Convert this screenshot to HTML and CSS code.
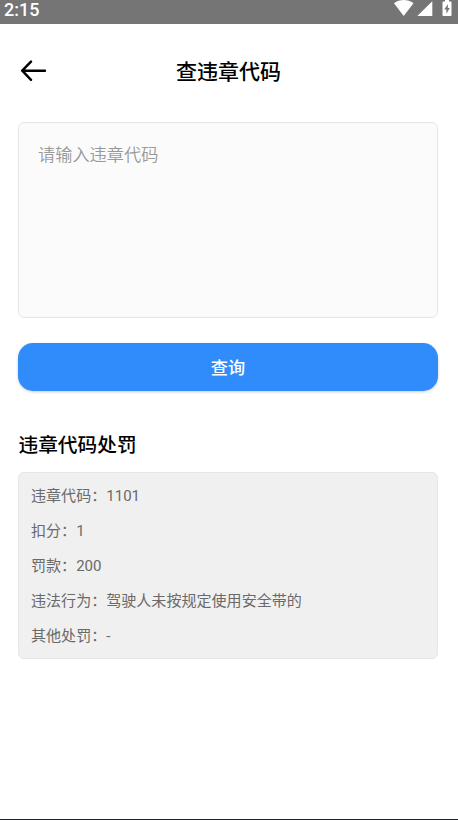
FILE: index.html
```html
<!DOCTYPE html>
<html lang="zh-CN">

<head>
    <meta charset="UTF-8">
    <meta name="viewport" content="width=device-width, initial-scale=1.0">
    <title>查违章代码</title>
    <link rel="stylesheet" href="styles.css">
</head>

<body>
    <div class="status-bar">
        <span class="time">2:15</span>
        <svg class="status-icons" width="58" height="18" viewBox="0 0 58 18" fill="#fff">
            <path d="M0 3.2C5.5-1 14-1 19.5 3.2L9.7 16Z" />
            <path d="M38.300 1.300V16H23.300Z" />
            <path fill-rule="evenodd" d="M55 1.500h1.700c.5 0 .8.3.8.8V15.200c0 .5-.3.8-.8.8H49.300c-.5 0-.8-.3-.8-.8V2.300c0-.5.3-.8.8-.8H51V0h4ZM53.800 4L50.300 9.600H52.400V13.800L55.800 8H53.800Z" />
        </svg>
    </div>

    <div class="header">
        <button class="back" aria-label="返回">
            <svg width="26" height="22" viewBox="0 0 26 22">
                <path d="M10 1.600L1.200 10.700L10 19.800M1.200 10.700H24" />
            </svg>
        </button>
        <h1>查违章代码</h1>
    </div>

    <div class="content">
        <textarea class="code-input" placeholder="请输入违章代码"></textarea>
        <button class="search-btn">查询</button>

        <h2>违章代码处罚</h2>
        <div class="result">
            <p>违章代码：1101</p>
            <p>扣分：1</p>
            <p>罚款：200</p>
            <p>违法行为：驾驶人未按规定使用安全带的</p>
            <p>其他处罚：-</p>
        </div>
    </div>
</body>

</html>
```

FILE: styles.css
```css
* {
    padding: 0;
    margin: 0;
    box-sizing: border-box;
}

body {
    height: 820px;
    overflow: hidden;
    background-color: #fff;
    border-bottom: 1px solid #1f1f29;
    font-family: Roboto, "Noto Sans CJK SC", sans-serif;
}

.status-bar {
    display: flex;
    justify-content: space-between;
    height: 24px;
    padding: 0 6px 0 4px;
    background-color: #757575;
}

.time {
    font-size: 18px;
    font-weight: 500;
    line-height: 19px;
    color: #fff;
}

.header {
    display: grid;
    grid-template-columns: 26px 1fr 26px;
    align-items: center;
    height: 94px;
    padding: 0 22px 0 21px;
}

.back {
    height: 22px;
    border: none;
    background: none;
}

.back svg {
    display: block;
    fill: none;
    stroke: #000;
    stroke-width: 2.4;
    stroke-linecap: round;
    stroke-linejoin: round;
}

.header h1 {
    padding-bottom: 2px;
    font-size: 21px;
    font-weight: 500;
    text-align: center;
}

.content {
    padding: 4px 20px 0 18px;
}

.code-input {
    display: block;
    width: 100%;
    height: 196px;
    padding: 20px 19px;
    border: 1px solid #e6e6e6;
    border-radius: 6px;
    background-color: #fbfbfb;
    font-family: inherit;
    font-size: 17.2px;
    font-weight: 350;
    line-height: 25px;
    resize: none;
    outline: none;
}

.code-input::placeholder {
    color: #999;
}

.search-btn {
    display: block;
    width: 100%;
    height: 48px;
    margin-top: 25px;
    padding-bottom: 2px;
    border: none;
    border-radius: 15px;
    background-color: #318cfb;
    box-shadow: 0 1px 3px rgba(0, 0, 0, 0.2);
    font-family: inherit;
    font-size: 17.2px;
    font-weight: 500;
    color: #fff;
}

.content h2 {
    margin-top: 40px;
    padding-left: 0.5px;
    font-size: 19.7px;
    font-weight: 500;
    line-height: 30px;
}

.result {
    height: 187px;
    margin-top: 11px;
    padding: 5.6px 12px;
    border: 1px solid #e6e6e6;
    border-radius: 6px;
    background-color: #f0f0f0;
}

.result p {
    font-size: 15.05px;
    line-height: 35.2px;
    color: #6a6a6a;
}
```
